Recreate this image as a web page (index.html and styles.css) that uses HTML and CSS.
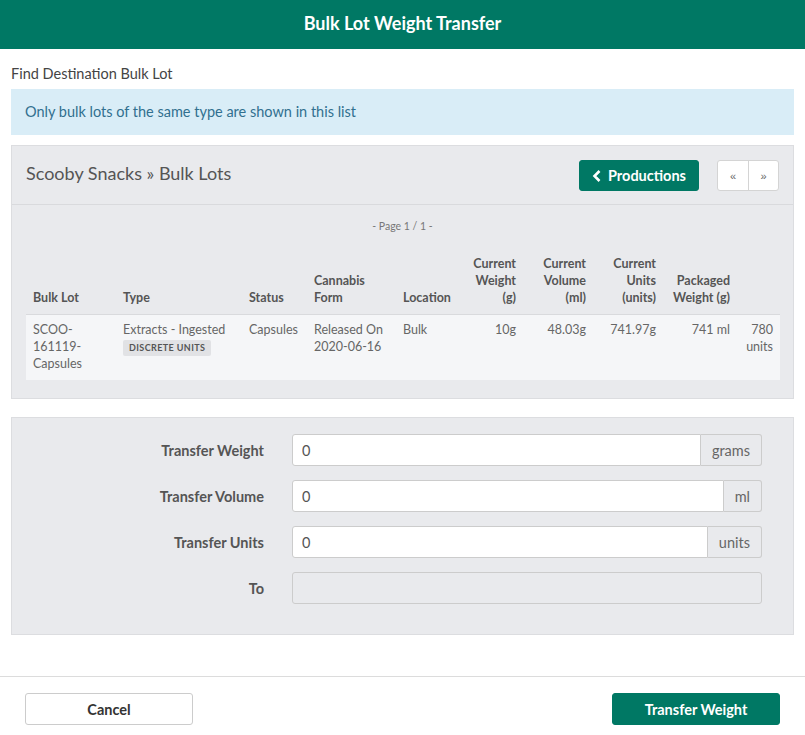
FILE: index.html
```html
<!DOCTYPE html>
<html lang="en">
<head>
    <meta charset="UTF-8">
    <title>Bulk Lot Weight Transfer</title>
    <link rel="stylesheet" href="styles.css">
</head>
<body>
    <header class="modal-header">
        <h1>Bulk Lot Weight Transfer</h1>
    </header>

    <div class="modal-body">
        <p class="find-label">Find Destination Bulk Lot</p>
        <div class="alert-info">Only bulk lots of the same type are shown in this list</div>

        <!-- bulk lot list -->
        <section class="panel">
            <div class="panel-heading">
                <h2>Scooby Snacks &raquo; Bulk Lots</h2>
                <div class="heading-actions">
                    <button class="btn btn-green btn-back">
                        <svg width="10" height="12" viewBox="0 0 10 12"><path d="M7.5 1 L2.5 6 L7.5 11" fill="none" stroke="#fff" stroke-width="2.6" stroke-linejoin="miter"/></svg>
                        Productions
                    </button>
                    <div class="pager">
                        <button>&laquo;</button>
                        <button>&raquo;</button>
                    </div>
                </div>
            </div>
            <div class="panel-body">
                <p class="page-info">- Page 1 / 1 -</p>
                <table class="lots">
                    <colgroup>
                        <col style="width:90px">
                        <col style="width:126px">
                        <col style="width:65px">
                        <col style="width:89px">
                        <col style="width:67px">
                        <col style="width:60px">
                        <col style="width:70px">
                        <col style="width:70px">
                        <col style="width:74px">
                        <col style="width:43px">
                    </colgroup>
                    <thead>
                        <tr>
                            <th>Bulk Lot</th>
                            <th>Type</th>
                            <th>Status</th>
                            <th>Cannabis Form</th>
                            <th>Location</th>
                            <th class="num">Current Weight (g)</th>
                            <th class="num">Current Volume (ml)</th>
                            <th class="num">Current Units (units)</th>
                            <th class="num">Packaged Weight (g)</th>
                            <th></th>
                        </tr>
                    </thead>
                    <tbody>
                        <tr>
                            <td>SCOO-<br>161119-<br>Capsules</td>
                            <td>Extracts - Ingested<br><span class="badge">Discrete units</span></td>
                            <td>Capsules</td>
                            <td>Released On 2020-06-16</td>
                            <td>Bulk</td>
                            <td class="num">10g</td>
                            <td class="num">48.03g</td>
                            <td class="num">741.97g</td>
                            <td class="num">741 ml</td>
                            <td class="num">780 units</td>
                        </tr>
                    </tbody>
                </table>
            </div>
        </section>

        <!-- transfer form -->
        <section class="panel form-panel">
            <div class="form-row">
                <label>Transfer Weight</label>
                <div class="input-group">
                    <input type="text" value="0">
                    <span class="addon">grams</span>
                </div>
            </div>
            <div class="form-row">
                <label>Transfer Volume</label>
                <div class="input-group">
                    <input type="text" value="0">
                    <span class="addon">ml</span>
                </div>
            </div>
            <div class="form-row">
                <label>Transfer Units</label>
                <div class="input-group">
                    <input type="text" value="0">
                    <span class="addon">units</span>
                </div>
            </div>
            <div class="form-row">
                <label>To</label>
                <div class="input-group">
                    <input type="text" disabled>
                </div>
            </div>
        </section>
    </div>

    <footer class="modal-footer">
        <button class="btn btn-default">Cancel</button>
        <button class="btn btn-green">Transfer Weight</button>
    </footer>
</body>
</html>
```

FILE: styles.css
```css
html, body {
    margin: 0;
    background: #fff;
    font-family: Lato, "Open Sans", sans-serif;
    color: #555;
}
.modal-header {
    height: 46px;
    padding-bottom: 3px;
    background: #007864;
    display: flex;
    align-items: center;
    justify-content: center;
}
.modal-header h1 {
    margin: 0;
    color: #fff;
    font-size: 18px;
    font-weight: 700;
}
.modal-body {
    padding: 16px 11px 41px;
}
.find-label {
    margin: 0 0 6px;
    font-size: 14.5px;
    line-height: 18px;
    color: #444;
}
.alert-info {
    background: #d9edf7;
    color: #31708f;
    font-size: 14.5px;
    line-height: 18px;
    padding: 14px 14px;
}
.panel {
    margin-top: 10px;
    background: #e9eaed;
    border: 1px solid #dcdde0;
}
.panel-heading {
    display: flex;
    justify-content: space-between;
    align-items: center;
    padding: 14px 14px 13px;
    border-bottom: 1px solid #d9dadd;
}
.panel-heading h2 {
    margin: 0 0 5px;
    font-size: 18px;
    font-weight: 400;
    color: #555;
}
.heading-actions {
    display: flex;
    gap: 18px;
}
.btn {
    font-family: Lato, sans-serif;
    font-size: 14.5px;
    font-weight: 700;
    border-radius: 3px;
    cursor: pointer;
}
.btn-green {
    background: #007864;
    border: 1px solid #007864;
    color: #fff;
}
.btn-back {
    width: 120px;
    height: 31px;
    display: flex;
    align-items: center;
    justify-content: center;
    gap: 6px;
    padding: 0;
}
.pager {
    display: flex;
    border: 1px solid #d4d4d4;
    border-radius: 3px;
    background: #fff;
}
.pager button {
    width: 30px;
    height: 29px;
    border: 0;
    background: none;
    color: #666;
    font-size: 11px;
    padding: 0;
}
.pager button + button {
    border-left: 1px solid #d4d4d4;
}
.panel-body {
    padding: 14px 14px 18px;
}
.page-info {
    margin: 0 0 14px;
    text-align: center;
    font-size: 10.5px;
    line-height: 14px;
    color: #777;
}
.lots {
    width: 754px;
    table-layout: fixed;
    border-collapse: collapse;
    font-size: 12.5px;
    line-height: 17px;
}
.lots th {
    text-align: left;
    vertical-align: bottom;
    font-weight: 700;
    color: #555;
    padding: 8px 7px 8px;
    border-bottom: 1px solid #d9dadd;
}
.lots td {
    vertical-align: top;
    color: #666;
    padding: 6px 7px 8px;
    background: #f5f6f8;
}
.lots .num {
    text-align: right;
}
.badge {
    display: inline-block;
    margin-top: 2px;
    padding: 0 6px;
    background: #e1e2e5;
    border-radius: 2px;
    font-size: 9px;
    line-height: 16px;
    font-weight: 700;
    letter-spacing: 0.4px;
    text-transform: uppercase;
    color: #555;
}
.form-panel {
    margin-top: 18px;
    padding: 16px 31px 30px 0;
    display: flex;
    flex-direction: column;
    gap: 14px;
}
.form-row {
    display: grid;
    grid-template-columns: 252px 1fr;
    gap: 28px;
    align-items: center;
}
.form-row label {
    text-align: right;
    font-size: 14.5px;
    font-weight: 700;
    color: #555;
}
.input-group {
    display: flex;
    height: 32px;
}
.input-group input {
    flex: 1;
    min-width: 0;
    box-sizing: border-box;
    height: 32px;
    border: 1px solid #ccc;
    border-radius: 3px;
    padding: 0 9px;
    font-family: Lato, sans-serif;
    font-size: 14.5px;
    color: #555;
    background: #fff;
}
.input-group input:disabled {
    background: #e9eaed;
}
.input-group input:not(:last-child) {
    border-top-right-radius: 0;
    border-bottom-right-radius: 0;
}
.addon {
    display: flex;
    align-items: center;
    padding: 0 11px;
    border: 1px solid #ccc;
    border-left: 0;
    border-radius: 0 3px 3px 0;
    font-size: 14.5px;
    color: #666;
    background: #e9eaed;
}
.modal-footer {
    border-top: 1px solid #dcdcdc;
    display: flex;
    justify-content: space-between;
    padding: 16px 25px 9px;
}
.modal-footer .btn {
    width: 168px;
    height: 32px;
}
.btn-default {
    background: #fff;
    border: 1px solid #ccc;
    color: #333;
}
```
